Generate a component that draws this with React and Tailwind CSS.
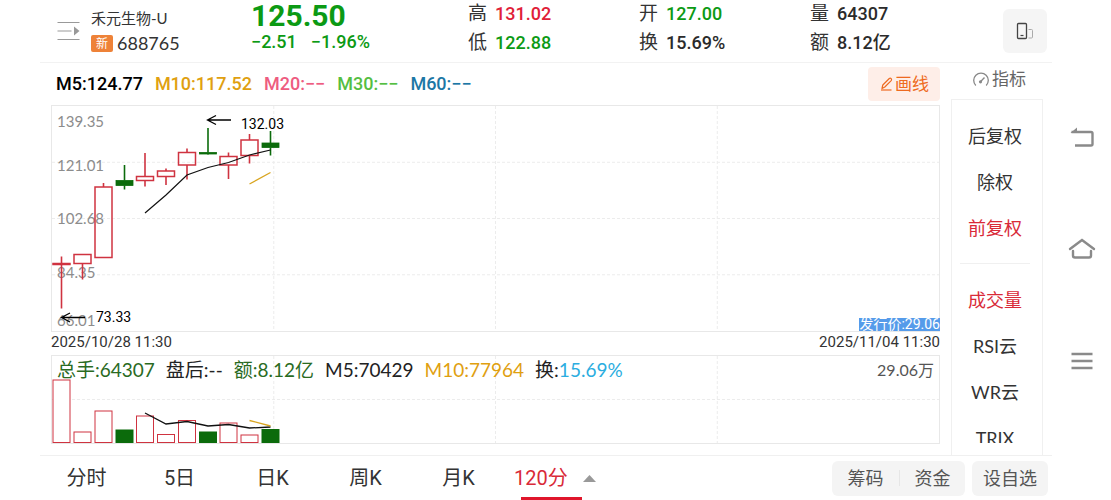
import React from "react";

const RED = "#cf3340";
const GREEN = "#0b6b0b";
const GRID = "#ececec";

// x: centre, top/bottom: body, high/low: wick, vol: top of the volume bar
const candles = [
  { x: 10.5, top: 158.5, bottom: 159.5, high: 151.5, low: 203.5, vol: 25, up: true },
  { x: 31.5, top: 149.5, bottom: 158.5, high: 149.5, low: 174.5, vol: 77, up: true },
  { x: 52.5, top: 82, bottom: 152.5, high: 78, low: 152.5, vol: 56, up: true },
  { x: 73.5, top: 75.5, bottom: 80.5, high: 60, low: 84.5, vol: 75, up: false },
  { x: 94, top: 71.5, bottom: 75.5, high: 48, low: 81.5, vol: 61, up: true },
  { x: 115, top: 66, bottom: 71.5, high: 63.5, low: 80, vol: 79.5, up: true },
  { x: 136, top: 47.5, bottom: 60, high: 43.5, low: 74.5, vol: 65.5, up: true },
  { x: 157, top: 47.5, bottom: 49, high: 23, low: 49.5, vol: 77, up: false },
  { x: 177.5, top: 51.5, bottom: 60, high: 47.5, low: 74, vol: 68, up: true },
  { x: 198.5, top: 35, bottom: 50.5, high: 29, low: 58.5, vol: 80, up: true },
  { x: 219.5, top: 38, bottom: 42.5, high: 26, low: 50.5, vol: 74.5, up: false },
];

const priceLabels = [
  { text: "139.35", y: 22 },
  { text: "121.01", y: 66 },
  { text: "102.68", y: 119 },
  { text: "84.35", y: 173 },
  { text: "66.01", y: 221 },
];

function Grid({ rows }) {
  return (
    <g stroke={GRID} strokeWidth="1" strokeDasharray="3 2">
      {["25%", "50%", "75%"].map((x) => (
        <line key={x} x1={x} x2={x} y1="0" y2="100%" />
      ))}
      {rows.map((y) => (
        <line key={y} x1="0" x2="100%" y1={y} y2={y} />
      ))}
    </g>
  );
}

function Candle({ x, top, bottom, high, low, up }) {
  const color = up ? RED : GREEN;
  return (
    <g stroke={color} strokeWidth="1.6">
      <line x1={x} x2={x} y1={high} y2={top} />
      <line x1={x} x2={x} y1={bottom} y2={low} />
      <rect x={x - 8.5} y={top} width="17" height={bottom - top} fill={up ? "none" : color} strokeWidth={up ? 1.5 : 0.8} />
    </g>
  );
}

function PriceChart() {
  return (
    <div className="relative h-[227px] border border-[#e8e8e8]">
      <svg className="block h-full w-full font-[Roboto,sans-serif]" role="img" aria-label="K线图">
        <Grid rows={["25%", "50%", "75%"]} />
        <g transform="translate(-1 -1)">
          <g className="fill-[#8c8c8c] font-[Lato,sans-serif] text-[15px]">
            {priceLabels.map((l) => (
              <text key={l.text} x="6" y={l.y}>{l.text}</text>
            ))}
          </g>
          {candles.map((c) => (
            <Candle key={c.x} {...c} />
          ))}
          <polyline points="94,108 115,90 136,70 157,62.5 177.5,57.5 198.5,50 219.5,45" fill="none" stroke="#111" strokeWidth="1.2" />
          <line x1="198.5" y1="79" x2="219.5" y2="67.5" stroke="#d9a520" strokeWidth="1.4" />
          <g fill="none" stroke="#000" strokeWidth="1.3">
            <path d="M180 15H157M165 10.5L156.5 15L165 19.5" />
            <path d="M34 212.5H11M19 208L10.5 212.5L19 217" />
          </g>
          <g className="fill-black text-[14px]">
            <text x="190" y="24">132.03</text>
            <text x="45" y="217">73.33</text>
          </g>
        </g>
      </svg>
      <span className="absolute -right-px bottom-0 bg-[#559bea] text-sm leading-[13px] text-white">发行价:29.06</span>
    </div>
  );
}

function VolumeChart() {
  return (
    <div className="relative h-[89px] border border-[#e8e8e8] font-[Lato,'Noto_Sans_CJK_SC',sans-serif]">
      <svg className="block h-full w-full" role="img" aria-label="成交量">
        <Grid rows={["50%"]} />
        <g transform="translate(-1 -1)">
          {candles.map((c) => (
            <rect
              key={c.x}
              x={c.x - 8.5}
              y={c.vol}
              width="17"
              height={87.5 - c.vol}
              fill={c.up ? "#fff" : GREEN}
              stroke={c.up ? RED : GREEN}
              strokeWidth="1"
            />
          ))}
          <polyline points="94,58 115,69 136,66.5 157,71 177.5,69.5 198.5,73 219.5,72" fill="none" stroke="#111" strokeWidth="1.3" />
          <line x1="198.5" y1="65.5" x2="219.5" y2="71" stroke="#d9a520" strokeWidth="1.3" />
        </g>
      </svg>
      <div className="absolute inset-x-0 top-0 flex items-center px-[5px] text-[19px] leading-7 whitespace-nowrap text-[#222]">
        <div className="flex gap-[11px]">
          <span className="text-[#2a6b1f]">总手:64307</span>
          <span>盘后:--</span>
          <span className="text-[#2a6b1f]">额:8.12亿</span>
          <span>M5:70429</span>
          <span className="text-[#e0a010]">M10:77964</span>
          <span>换:<span className="text-[#2bade0]">15.69%</span></span>
        </div>
        <span className="ml-auto text-[16px] text-[#555]">29.06万</span>
      </div>
    </div>
  );
}

function Stat({ label, value, color }) {
  return (
    <div className="flex items-center gap-2">
      <dt className="text-[19px] text-[#333]">{label}</dt>
      <dd className={"text-lg leading-7 font-medium " + color}>{value}</dd>
    </div>
  );
}

function Header() {
  return (
    <header className="flex h-[63px] border-b border-[#f2f2f2] pr-[5px] pl-[17px]">
      <button aria-label="切换列表" className="mt-4 h-[30px] w-[34px] shrink-0">
        <svg width="24" height="30" viewBox="0 0 24 30" fill="none" stroke="#999" strokeWidth="1.2">
          <path d="M0.5 6.5H22.5M0.5 15H14.5M0.5 23.5H22.5" />
          <path d="M17 10.5L22.5 15L17 19.5Z" fill="#999" stroke="none" />
        </svg>
      </button>
      <div className="w-[160px] shrink-0 pt-[5px] font-[Lato,'Noto_Sans_CJK_SC',sans-serif] text-[#333]">
        <h1 className="text-[15px] leading-[26px]">禾元生物-U</h1>
        <div className="flex items-center gap-1">
          <span className="rounded-xs bg-[#ee8238] px-[5px] text-xs leading-[17px] text-white">新</span>
          <span className="text-lg leading-6">688765</span>
        </div>
      </div>
      <div className="w-[217px] shrink-0 text-[#0c9a14]">
        <div className="text-[30px] leading-8 font-bold">125.50</div>
        <div className="flex gap-[14px] text-lg leading-5 font-medium">
          <span>−2.51</span>
          <span>−1.96%</span>
        </div>
      </div>
      <dl className="w-[171px] shrink-0">
        <Stat label="高" value="131.02" color="text-[#e02038]" />
        <Stat label="低" value="122.88" color="text-[#0c9a14]" />
      </dl>
      <dl className="w-[171px] shrink-0">
        <Stat label="开" value="127.00" color="text-[#0c9a14]" />
        <Stat label="换" value="15.69%" color="text-[#2b2b2b]" />
      </dl>
      <dl className="shrink-0">
        <Stat label="量" value="64307" color="text-[#2b2b2b]" />
        <Stat label="额" value="8.12亿" color="text-[#2b2b2b]" />
      </dl>
      <button aria-label="竖屏" className="mt-[9px] ml-auto flex size-11 items-center justify-center rounded-md bg-[#f5f5f5]">
        <svg width="18" height="18" viewBox="0 0 18 18" fill="none">
          <rect x="1.5" y="1.5" width="9" height="15" rx="1" stroke="#444" strokeWidth="1.3" />
          <path d="M4.5 13.5H7.5" stroke="#444" strokeWidth="1.2" />
          <path d="M12.5 7.5H15.5Q16.5 7.5 16.5 8.5V15Q16.5 16 15.5 16H12.5" stroke="#aaa" />
        </svg>
      </button>
    </header>
  );
}

function MovingAverages() {
  return (
    <div className="flex h-[42px] items-center gap-3 pl-[5px] text-lg font-medium">
      <span className="text-black">M5:124.77</span>
      <span className="text-[#e0a010]">M10:117.52</span>
      <span className="text-[#ee5c80]">M20:−−</span>
      <span className="text-[#55be42]">M30:−−</span>
      <span className="text-[#1c77a5]">M60:−−</span>
      <button className="ml-auto flex h-[34px] items-center rounded-sm bg-[#feeee8] px-[11px] text-[17px] font-normal text-[#ee6a20]">
        <svg width="16" height="16" viewBox="0 0 16 16" fill="none" stroke="currentColor" strokeWidth="1.2" strokeLinejoin="round">
          <path d="M3 12.5L3.8 9L10.3 2.5Q11.3 1.8 12.2 2.7Q13 3.6 12.2 4.6L5.8 11L3 12.5Z" />
          <path d="M2 14H12.5" />
        </svg>
        画线
      </button>
    </div>
  );
}

function Item({ children, active }) {
  return (
    <button className={"block h-[46px] w-full shrink-0 text-lg " + (active ? "text-[#d92a38]" : "text-[#333]")}>
      {children}
    </button>
  );
}

function Sidebar() {
  return (
    <aside className="flex w-[92px] shrink-0 flex-col">
      <button className="flex h-9 items-center justify-center gap-[2px] pb-[2px] pl-1 text-[17px] text-[#666]">
        <svg width="18" height="18" viewBox="0 0 18 18" fill="none" stroke="#888" strokeWidth="1.3">
          <path d="M3.8 14.5A7.3 7.3 0 1 1 14.2 14.5" />
          <path d="M8.5 10.8L12.5 6.5" />
          <circle cx="8.5" cy="10.8" r="1.6" fill="#888" stroke="none" />
        </svg>
        指标
      </button>
      <div className="h-0 grow border border-b-0 border-[#f0f0f0] pb-3">
        <div className="flex h-full flex-col overflow-hidden pt-[13px] pr-1 font-[Lato,'Noto_Sans_CJK_SC',sans-serif]">
          <Item>后复权</Item>
          <Item>除权</Item>
          <Item active>前复权</Item>
          <hr className="mx-2 mt-3 mb-[13px] shrink-0 border-[#f0f0f0]" />
          <Item active>成交量</Item>
          <Item>RSI云</Item>
          <Item>WR云</Item>
          <Item>TRIX</Item>
        </div>
      </div>
    </aside>
  );
}

function PeriodBar() {
  return (
    <footer className="flex h-[45px] items-center border-t border-[#f0f0f0] pr-1">
      <nav className="flex h-full text-xl text-[#333]">
        {["分时", "5日", "日K", "周K", "月K"].map((t) => (
          <button key={t} className="w-[93px]">{t}</button>
        ))}
        <button className="relative ml-[9px] flex items-center gap-[15px] text-[#d92a38]">
          120分
          <svg width="13" height="7" viewBox="0 0 13 7">
            <path d="M0 7L6.5 0L13 7Z" fill="#999" />
          </svg>
          <span className="absolute bottom-0 left-[7px] h-[3px] w-[61px] bg-[#e0162b]" />
        </button>
      </nav>
      <div className="ml-auto flex gap-[7px] text-lg leading-[35px] text-[#555]">
        <div className="flex items-center rounded-md bg-[#f4f4f4]">
          <button className="w-[67px]">筹码</button>
          <span className="h-4 w-px bg-[#e6e6e6]" />
          <button className="w-[65px]">资金</button>
        </div>
        <button className="rounded-md bg-[#f4f4f4] px-[11px]">设自选</button>
      </div>
    </footer>
  );
}

function SystemNav() {
  return (
    <nav className="flex w-[59px] shrink-0 flex-col items-center justify-center gap-[88px] pb-[2px]">
      <button aria-label="返回">
        <svg className="block" width="26" height="24" viewBox="0 0 26 24" fill="none" stroke="#8a8a8a" strokeWidth="2.4">
          <path d="M2.5 7H22Q23.5 7 23.5 8.5V19Q23.5 20.5 22 20.5H6" />
          <path d="M1.5 8L8 2.5V8Z" fill="#8a8a8a" stroke="none" />
        </svg>
      </button>
      <button aria-label="主页">
        <svg className="block" width="28" height="24" viewBox="0 0 28 24" fill="none" stroke="#8a8a8a" strokeWidth="2.4" strokeLinecap="round">
          <path d="M2 12L14 3L26 12" />
          <path d="M5 14V18.5Q5 20.5 7 20.5H21Q23 20.5 23 18.5V14" />
        </svg>
      </button>
      <button aria-label="菜单">
        <svg className="block" width="24" height="24" viewBox="0 0 24 24" fill="none" stroke="#8a8a8a" strokeWidth="2.4">
          <path d="M1.5 5H22.5M1.5 12H22.5M1.5 19H22.5" />
        </svg>
      </button>
    </nav>
  );
}

export default function App() {
  return (
    <div className="flex min-h-screen bg-white pl-10 font-[Roboto,'Noto_Sans_CJK_SC',sans-serif] whitespace-nowrap">
      <div className="flex min-w-0 grow flex-col">
        <Header />
        <main className="flex grow gap-[11px] pr-[9px] pl-[11px]">
          <div className="min-w-0 grow">
            <MovingAverages />
            <PriceChart />
            <div className="flex justify-between text-[15px] leading-5 text-[#333]">
              <span>2025/10/28 11:30</span>
              <span>2025/11/04 11:30</span>
            </div>
            <div className="pt-[3px]">
              <VolumeChart />
            </div>
          </div>
          <Sidebar />
        </main>
        <PeriodBar />
      </div>
      <SystemNav />
    </div>
  );
}
